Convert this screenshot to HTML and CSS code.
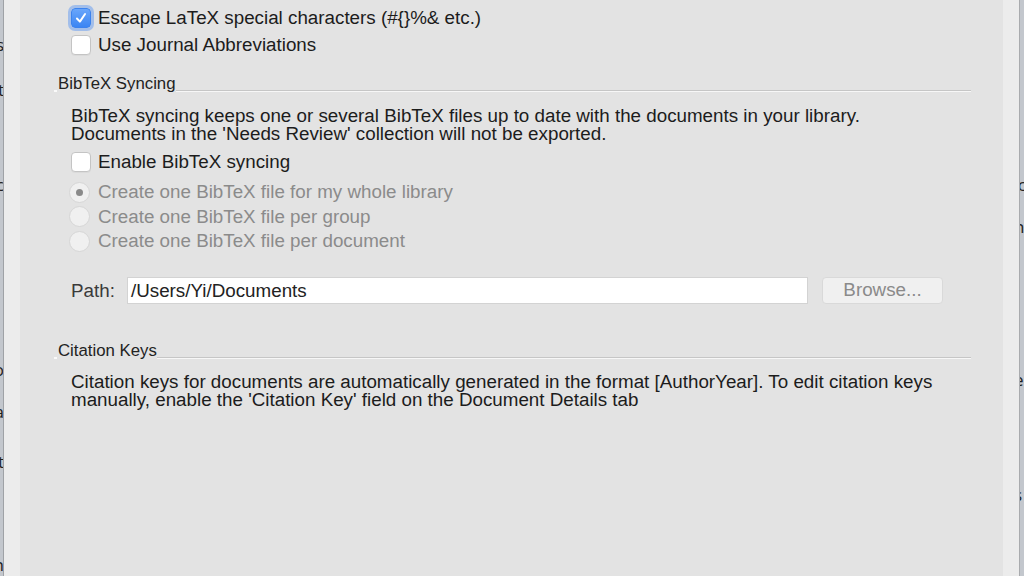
FILE: index.html
```html
<!DOCTYPE html>
<html>
<head>
<meta charset="utf-8">
<link rel="stylesheet" href="styles.css">
</head>
<body>
<div class="screen">
  <div class="behind behind-left">
    <div class="frag f1">s</div>
    <div class="frag f2">t</div>
    <div class="frag f3">c</div>
    <div class="frag f4">o</div>
    <div class="frag f5">a</div>
    <div class="frag f6">t</div>
    <div class="frag f7">n</div>
  </div>
  <div class="edge"></div>
  <div class="panel">
    <div class="check-row first">
      <span class="checkbox checked">
        <svg viewBox="0 0 20 20" width="20" height="20"><path d="M5.5 10.5 L8.8 14 L14.5 5.5" fill="none" stroke="#fff" stroke-width="2.2" stroke-linecap="round" stroke-linejoin="round"/></svg>
      </span>
      <span class="label">Escape LaTeX special characters (#{}%&amp; etc.)</span>
    </div>
    <div class="check-row">
      <span class="checkbox"></span>
      <span class="label">Use Journal Abbreviations</span>
    </div>

    <div class="section-head sh1">
      <span class="head-title">BibTeX Syncing</span>
      <span class="head-line"></span>
    </div>
    <div class="section-body">
      <p class="desc">BibTeX syncing keeps one or several BibTeX files up to date with the documents in your library.<br>Documents in the 'Needs Review' collection will not be exported.</p>
      <div class="check-row enable">
        <span class="checkbox"></span>
        <span class="label">Enable BibTeX syncing</span>
      </div>
      <div class="radio-row r1">
        <span class="radio selected"></span>
        <span class="label disabled">Create one BibTeX file for my whole library</span>
      </div>
      <div class="radio-row">
        <span class="radio"></span>
        <span class="label disabled">Create one BibTeX file per group</span>
      </div>
      <div class="radio-row">
        <span class="radio"></span>
        <span class="label disabled">Create one BibTeX file per document</span>
      </div>
      <div class="path-row">
        <span class="path-label">Path:</span>
        <span class="path-input">/Users/Yi/Documents</span>
        <span class="button">Browse...</span>
      </div>
    </div>

    <div class="section-head sh2">
      <span class="head-title">Citation Keys</span>
      <span class="head-line"></span>
    </div>
    <div class="section-body">
      <p class="desc cite">Citation keys for documents are automatically generated in the format [AuthorYear]. To edit citation keys<br>manually, enable the 'Citation Key' field on the Document Details tab</p>
    </div>
  </div>
  <div class="edge"></div>
  <div class="behind behind-right">
    <div class="frag g1">'c</div>
    <div class="frag g2">n</div>
    <div class="frag g3">e</div>
    <div class="frag g4">s</div>
    <div class="frag g5">(</div>
  </div>
</div>
</body>
</html>
```
FILE: styles.css
```css
html, body {
  margin: 0;
  padding: 0;
}
body {
  width: 1024px;
  height: 576px;
  overflow: hidden;
  background: #e3e3e3;
  font-family: "Liberation Sans", Arial, sans-serif;
  color: #1c1c1c;
}
.screen {
  display: flex;
  width: 1024px;
  height: 576px;
}
.behind {
  flex: none;
  background: #c3c7cd;
  overflow: hidden;
  display: flex;
  flex-direction: column;
  font-family: "Open Sans", sans-serif;
  font-size: 17px;
  color: #222;
}
.behind-left {
  width: 3px;
  border-right: 1px solid #9fa2a6;
  align-items: flex-end;
}
.behind-left .frag {
  margin-right: -1px;
}
.behind-right {
  width: 4px;
  border-left: 1px solid #a9abae;
  align-items: flex-start;
}
.behind-right .frag {
  margin-left: -6px;
}
.frag {
  line-height: 20px;
  height: 20px;
  white-space: nowrap;
}
.f1 { margin-top: 35px; }
.f2 { margin-top: 25px; }
.f3 { margin-top: 75px; }
.f4 { margin-top: 165px; }
.f5 { margin-top: 22px; }
.f6 { margin-top: 30px; }
.f7 { margin-top: 83px; }
.g1 { margin-top: 175px; }
.g2 { margin-top: 22px; }
.g3 { margin-top: 133px; }
.g4 { margin-top: 95px; }
.g5 { margin-top: 25px; }

.edge {
  flex: none;
  width: 16px;
  background: #ececec;
}
.panel {
  flex: 1;
  background: #e3e3e3;
  padding: 0 32px 0 34px;
}
.check-row {
  display: flex;
  align-items: center;
  height: 27px;
  padding-left: 17px;
}
.check-row.first {
  margin-top: 4px;
}
.checkbox {
  flex: none;
  width: 20px;
  height: 20px;
  box-sizing: border-box;
  border: 1px solid #c4c4c4;
  border-radius: 4px;
  background: #ffffff;
  margin-right: 7px;
  display: flex;
  align-items: center;
  justify-content: center;
  box-shadow: 0 1px 0 rgba(0,0,0,0.04);
}
.checkbox.checked {
  border: 1px solid #3c83ee;
  background: linear-gradient(#69a6fb, #3b85f3);
  box-shadow: 0 0 0 3px rgba(110,160,240,0.55);
}
.checkbox svg {
  display: block;
}
.label {
  font-size: 18.8px;
  line-height: 22px;
  white-space: nowrap;
}
.label.disabled {
  color: #8b8b8b;
}
.section-head {
  display: flex;
  align-items: flex-end;
}
.sh1 { margin-top: 18px; }
.sh2 { margin-top: 38px; }
.head-title {
  font-size: 16.8px;
  line-height: 16px;
  color: #222;
  padding-left: 4px;
  white-space: nowrap;
  position: relative;
}
.head-title::before {
  content: "";
  position: absolute;
  left: 0;
  bottom: 0;
  width: 3px;
  height: 2px;
  background: #fafafa;
}
.head-line {
  flex: 1;
  height: 0;
  border-top: 1px solid #c6c6c6;
  border-bottom: 1px solid #f7f7f7;
}
.section-body {
  padding-left: 17px;
}
.desc {
  margin: 15px 0 0 0;
  font-size: 18.8px;
  line-height: 18px;
  white-space: nowrap;
}
.desc.cite {
  margin-top: 14px;
}
.check-row.enable {
  padding-left: 0;
  margin-top: 5px;
  height: 27px;
}
.radio-row {
  display: flex;
  align-items: center;
  height: 24.5px;
}
.radio-row.r1 {
  margin-top: 5px;
}
.radio {
  flex: none;
  width: 21px;
  height: 21px;
  box-sizing: border-box;
  border-radius: 50%;
  border: 1px solid #d6d6d6;
  background: #f0f0f0;
  margin-right: 8px;
  margin-left: -2px;
  display: flex;
  align-items: center;
  justify-content: center;
}
.radio.selected::after {
  content: "";
  width: 7px;
  height: 7px;
  border-radius: 50%;
  background: #8a8a8a;
}
.path-row {
  display: flex;
  align-items: center;
  margin-top: 23px;
  height: 28px;
}
.path-label {
  font-size: 18.8px;
  color: #3a3a3a;
  width: 56px;
  flex: none;
}
.path-input {
  flex: none;
  width: 681px;
  height: 27px;
  box-sizing: border-box;
  background: #ffffff;
  border: 1px solid #d3d3d3;
  font-size: 18.8px;
  line-height: 25px;
  padding-left: 3px;
  color: #222;
}
.button {
  flex: none;
  margin-left: 14px;
  width: 121px;
  height: 27px;
  box-sizing: border-box;
  background: #f0f0f0;
  border: 1px solid #d9d9d9;
  border-radius: 4px;
  font-size: 18.8px;
  line-height: 23px;
  text-align: center;
  color: #8a8a8a;
}
```
